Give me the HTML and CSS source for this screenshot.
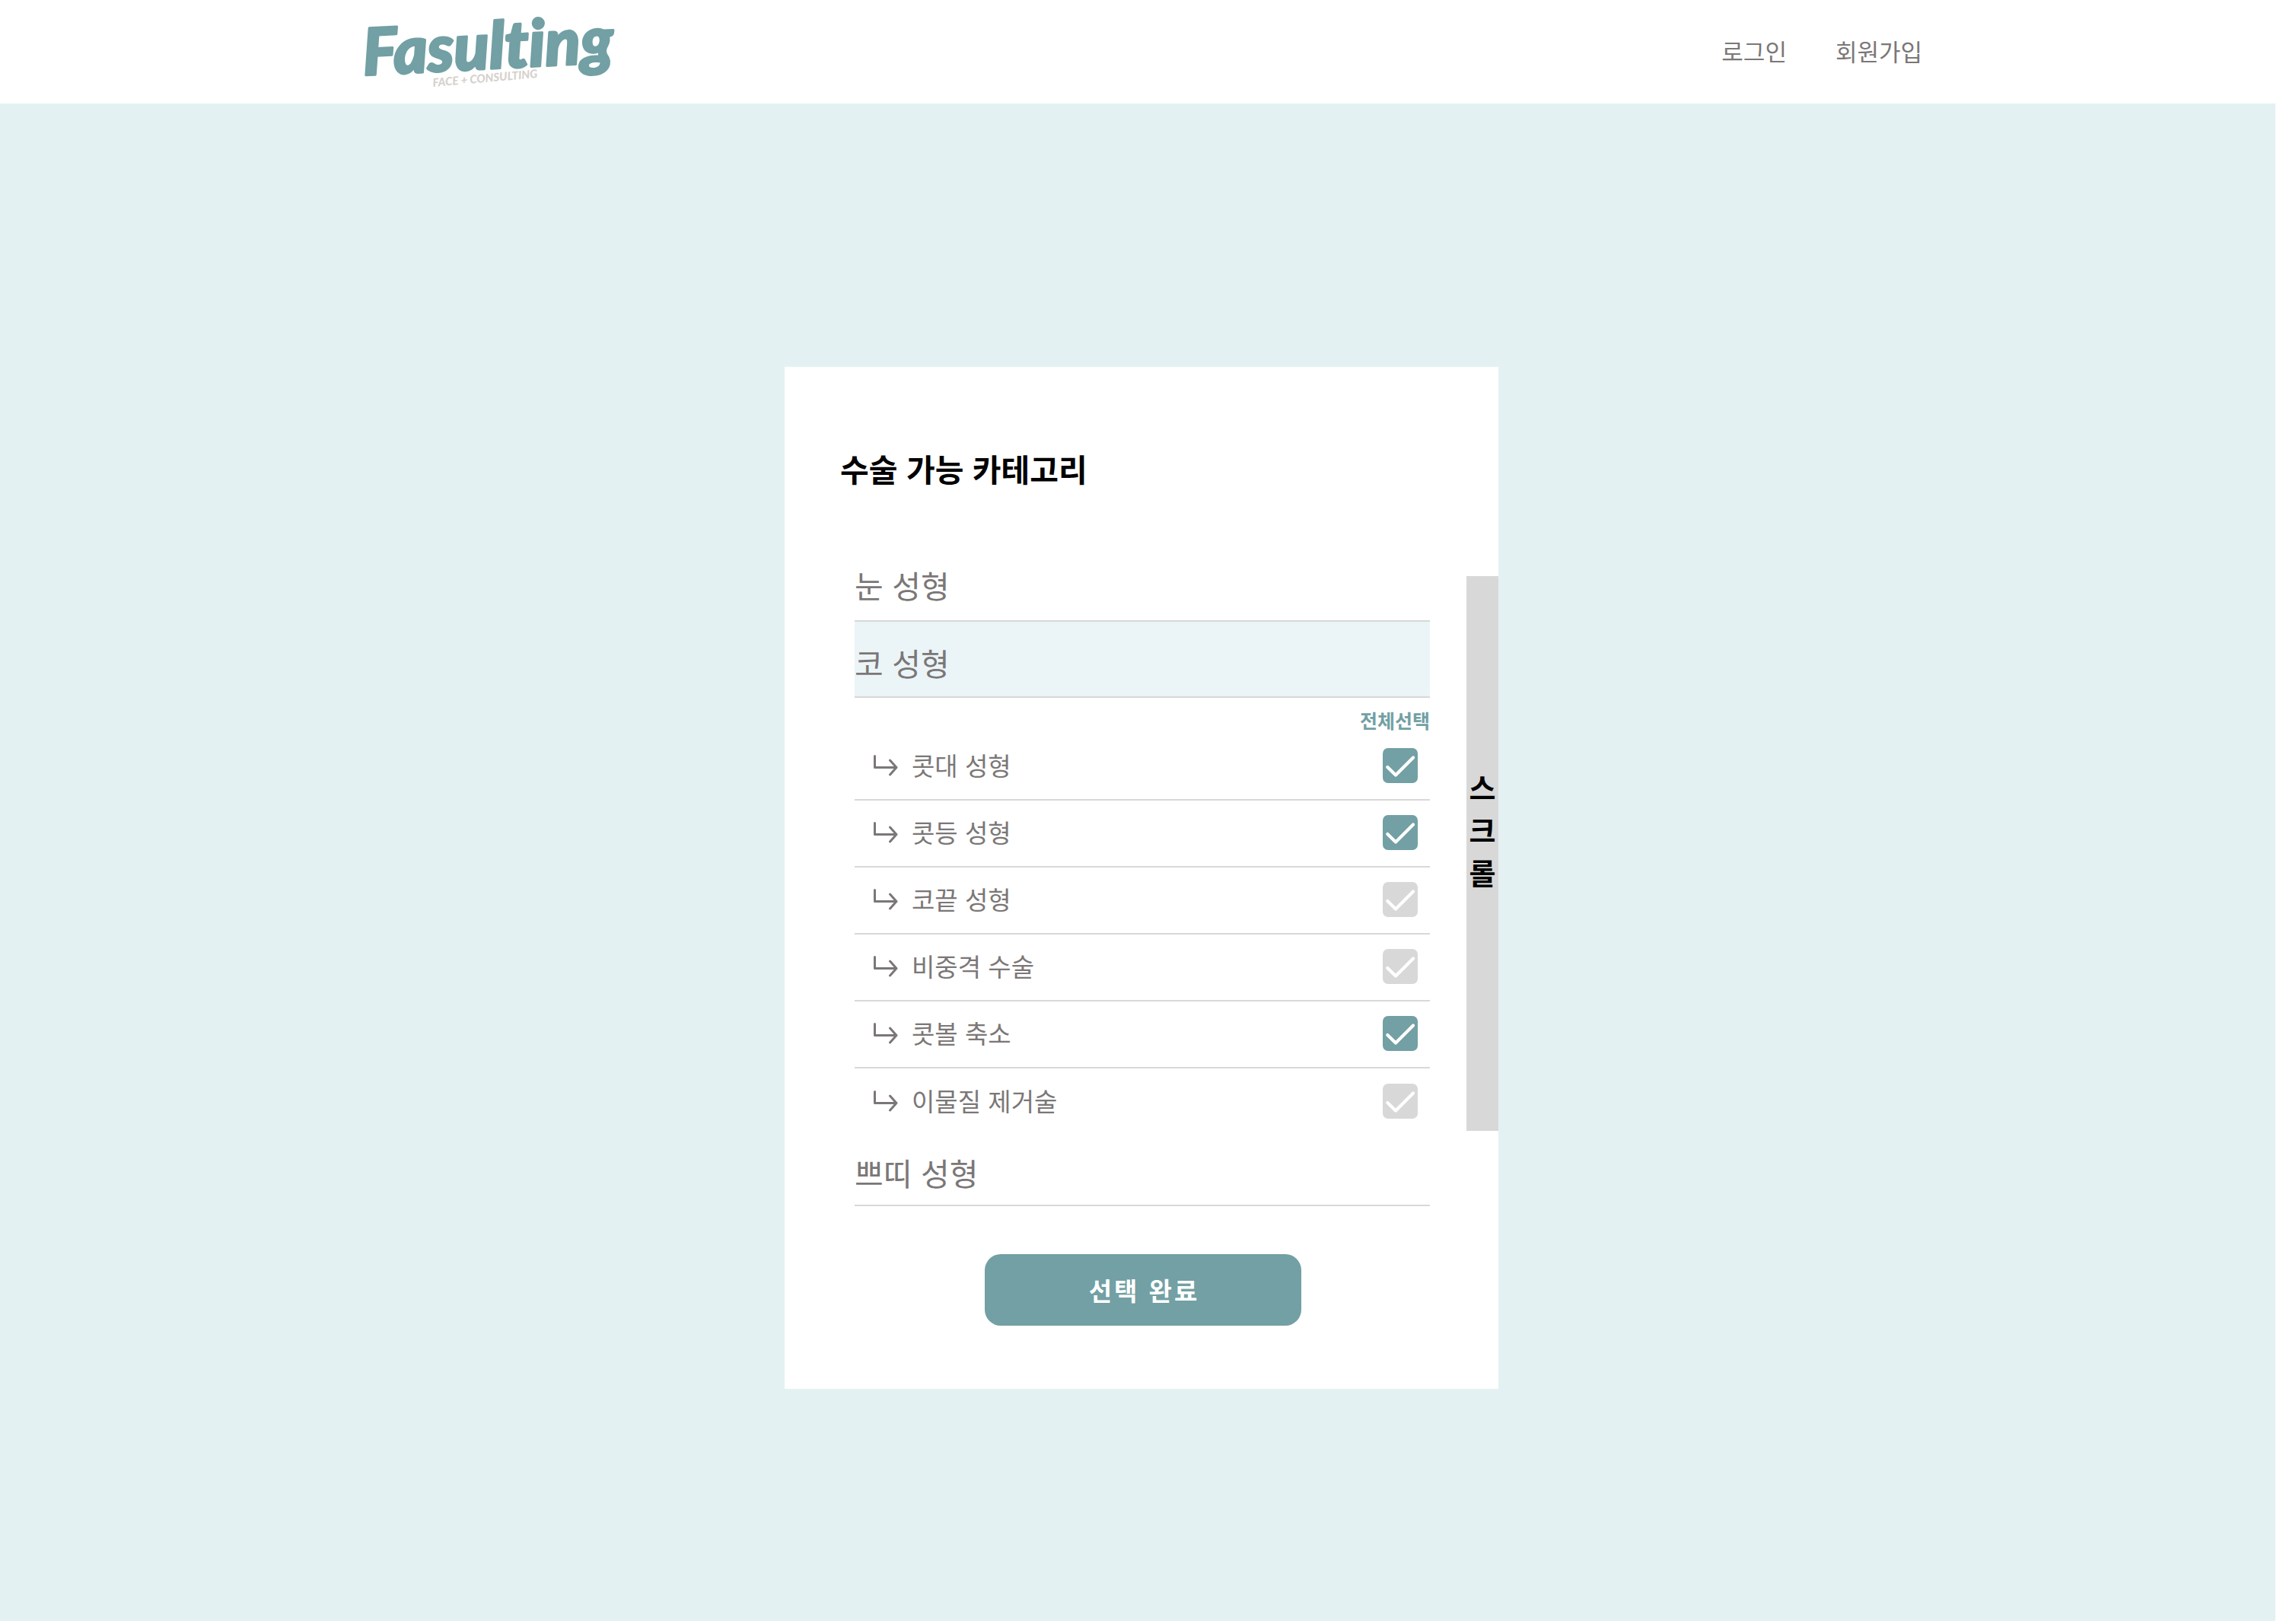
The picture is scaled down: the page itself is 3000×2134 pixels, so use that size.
FILE: index.html
```html
<!DOCTYPE html>
<html lang="ko">
<head>
  <meta charset="utf-8">
  <meta name="viewport" content="width=device-width, initial-scale=1">
  <title>Fasulting</title>
  <link rel="stylesheet" href="styles.css">
</head>
<body>
  <svg class="symbols" aria-hidden="true">
    <symbol id="arrow" viewBox="0 0 32 28">
      <path d="M1.5 1.5V16.5H30M21.5 7L30 16.5L21.5 26" fill="none" stroke="currentColor" stroke-width="3" stroke-linecap="round" stroke-linejoin="round"/>
    </symbol>
    <symbol id="check" viewBox="0 0 46 46">
      <path d="M6.3 25L17 35.6L40 12.6" fill="none" stroke="currentColor" stroke-width="4.2" stroke-linecap="round" stroke-linejoin="round"/>
    </symbol>
  </svg>

  <header class="header">
    <a class="logo" href="#">
      <svg class="logo-art" viewBox="0 0 336 100">
        <text class="logo-name" transform="translate(4 81) rotate(-3)">Fasulting</text>
        <text class="logo-tagline" transform="translate(95 96) rotate(-5)">FACE + CONSULTING</text>
      </svg>
    </a>
    <nav class="nav">
      <a href="#">로그인</a>
      <a href="#">회원가입</a>
    </nav>
  </header>

  <main class="main">
    <form class="card">
      <h1 class="title">수술 가능 카테고리</h1>
      <div class="list">
        <button type="button" class="category">눈 성형</button>
        <button type="button" class="category category-open">코 성형</button>
        <div class="select-all"><button type="button">전체선택</button></div>
        <ul class="options">
          <li><label class="option"><svg class="arrow"><use href="#arrow"/></svg><span class="name">콧대 성형</span><span class="tick"><input type="checkbox" checked><svg><use href="#check"/></svg></span></label></li>
          <li><label class="option"><svg class="arrow"><use href="#arrow"/></svg><span class="name">콧등 성형</span><span class="tick"><input type="checkbox" checked><svg><use href="#check"/></svg></span></label></li>
          <li><label class="option"><svg class="arrow"><use href="#arrow"/></svg><span class="name">코끝 성형</span><span class="tick"><input type="checkbox"><svg><use href="#check"/></svg></span></label></li>
          <li><label class="option"><svg class="arrow"><use href="#arrow"/></svg><span class="name">비중격 수술</span><span class="tick"><input type="checkbox"><svg><use href="#check"/></svg></span></label></li>
          <li><label class="option"><svg class="arrow"><use href="#arrow"/></svg><span class="name">콧볼 축소</span><span class="tick"><input type="checkbox" checked><svg><use href="#check"/></svg></span></label></li>
          <li><label class="option"><svg class="arrow"><use href="#arrow"/></svg><span class="name">이물질 제거술</span><span class="tick"><input type="checkbox"><svg><use href="#check"/></svg></span></label></li>
        </ul>
        <button type="button" class="category category-last">쁘띠 성형</button>
      </div>
      <div class="scroll"><span>스</span><span>크</span><span>롤</span></div>
      <button type="submit" class="submit">선택 완료</button>
    </form>
  </main>
</body>
</html>
```

FILE: styles.css
```css
:root {
  --teal: #72a0a4;
  --pale: #e3f1f2;
  --line: #d8d8d8;
  --text: #7b7777;
}

* {
  box-sizing: border-box;
}

body {
  margin: 0;
  background: #fff;
  color: var(--text);
  font-family: "Noto Sans CJK KR", "Noto Sans", sans-serif;
}

button {
  border: 0;
  padding: 0;
  background: none;
  color: inherit;
  font: inherit;
  cursor: pointer;
}

.symbols {
  display: none;
}

.header {
  display: flex;
  align-items: center;
  justify-content: space-between;
  min-height: 136px;
  padding: 0 15.8%;
}

.logo-art {
  display: block;
  width: 336px;
  height: 100px;
  overflow: visible;
}

.logo-name {
  fill: var(--teal);
  stroke: var(--teal);
  stroke-width: 3px;
  stroke-linejoin: round;
  font-family: Lato, sans-serif;
  font-size: 85px;
  font-style: italic;
  font-weight: 900;
  font-variant-ligatures: none;
}

.logo-tagline {
  fill: #d6d1cd;
  font-family: Lato, sans-serif;
  font-size: 15px;
  font-style: italic;
  font-weight: 900;
}

.nav {
  display: flex;
  gap: 64px;
  padding-bottom: 2px;
  font-size: 31px;
  line-height: 44px;
}

.nav a {
  color: inherit;
  text-decoration: none;
}

.main {
  min-height: calc(100vh - 140px);
  margin-right: 10px;
  padding: 346px 0 304px 10px;
  background: var(--pale);
}

.card {
  display: grid;
  grid-template-columns: 1fr 42px;
  width: 100%;
  max-width: 938px;
  margin: 0 auto;
  padding: 103px 0 83px;
  background: #fff;
}

.title {
  grid-column: 1 / -1;
  margin: 0 0 72px;
  padding-left: 73px;
  color: #000;
  font-size: 41px;
  font-weight: 700;
  line-height: 60px;
}

.list {
  margin: 0 48px 0 92px;
}

.category {
  display: block;
  width: 100%;
  height: 100px;
  padding: 4px 0 0;
  border-bottom: 2px solid var(--line);
  font-size: 41px;
  line-height: 60px;
  text-align: left;
}

.category-open {
  padding-top: 8px;
  background: #ebf5f8;
}

.category-last {
  height: 93px;
}

.select-all {
  display: flex;
  justify-content: flex-end;
  height: 47px;
  padding-top: 10px;
  color: var(--teal);
  font-size: 25px;
  font-weight: 700;
  line-height: 36px;
}

.options {
  margin: 0;
  padding: 0;
  list-style: none;
}

.option {
  display: flex;
  align-items: center;
  gap: 18px;
  height: 88px;
  padding: 0 16px 2px 25px;
  border-bottom: 2px solid var(--line);
  font-size: 33px;
  line-height: 48px;
}

.options li:last-child .option {
  padding-bottom: 0;
  border-bottom-color: transparent;
}

.arrow {
  width: 32px;
  height: 28px;
}

.name {
  flex: 1;
  padding-bottom: 2px;
}

.tick {
  display: grid;
  width: 46px;
  height: 46px;
  color: #fff;
}

.tick input,
.tick svg {
  grid-area: 1 / 1;
  width: 46px;
  height: 46px;
  margin: 0;
}

.tick svg {
  pointer-events: none;
}

.tick input {
  appearance: none;
  border-radius: 7px;
  background: var(--line);
}

.tick input:checked {
  background: var(--teal);
}

.scroll {
  display: flex;
  flex-direction: column;
  align-items: center;
  margin: 40px 0 99px;
  padding-top: 249px;
  background: var(--line);
  color: #000;
  font-size: 38px;
  font-weight: 700;
  line-height: 56px;
}

.submit {
  width: 416px;
  height: 94px;
  margin: 63px 0 0 46px;
  justify-self: center;
  border-radius: 21px;
  background: var(--teal);
  color: #fff;
  font-size: 33px;
  font-weight: 700;
  letter-spacing: 3px;
  text-indent: 3px;
}
```
